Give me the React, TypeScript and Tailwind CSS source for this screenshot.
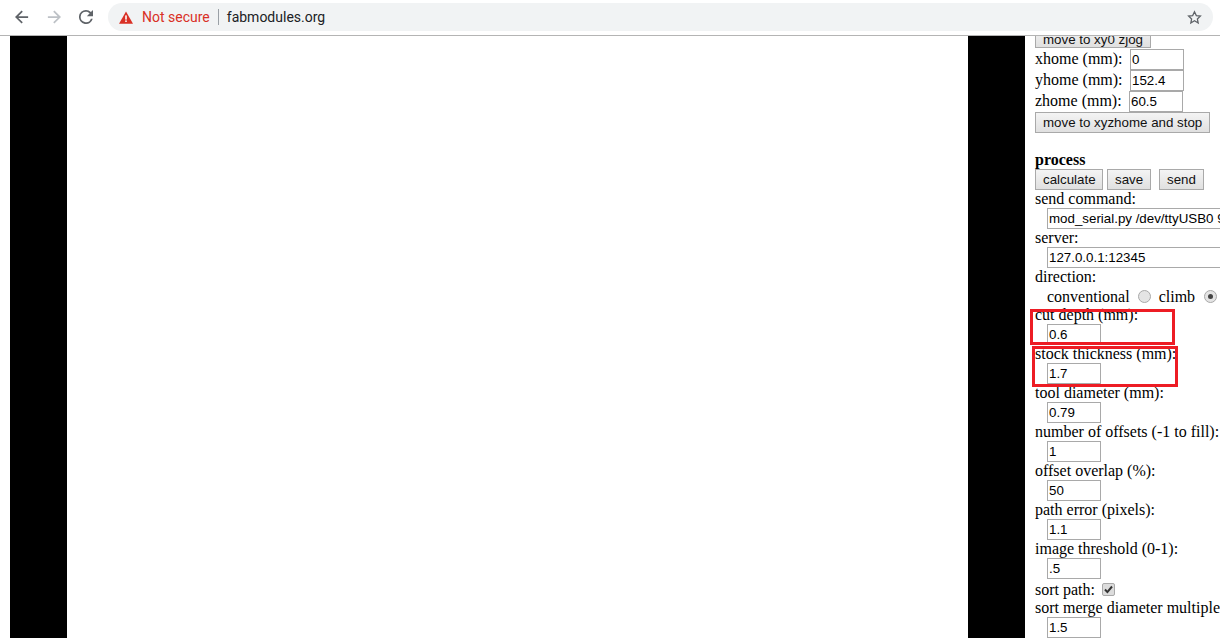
const serif = "font-['Liberation_Serif',serif] text-[16px] leading-[18px] text-black whitespace-nowrap";
const field =
  "block h-[21px] border border-[#a9a9a9] bg-white pl-[1px] font-['Liberation_Sans',sans-serif] text-[13.33px] text-black outline-none";
const button =
  "h-[21px] border border-[#a9a9a9] bg-gradient-to-b from-[#f4f4f4] to-[#e0e0e0] px-[7px] pt-[1px] font-['Liberation_Sans',sans-serif] text-[13.33px] leading-[18px] text-[#111] whitespace-nowrap";

function Toolbar() {
  return (
    <div className="flex h-[36px] items-center border-b border-[#b4b4b4] bg-white pb-[1px]">
      <div className="flex w-[108px] shrink-0 items-center">
        <svg width="14" height="14" viewBox="0 0 16 16" className="ml-[15px]" fill="#5f6368">
          <path d="M15 7H3.8l5.1-5.1L7.5.5 0 8l7.5 7.5 1.4-1.4L3.8 9H15z" />
        </svg>
        <svg width="14" height="14" viewBox="0 0 16 16" className="ml-[18px]" fill="#bdc1c6">
          <path d="M1 7h11.2L7.1 1.9 8.5.5 16 8l-7.5 7.5-1.4-1.4L12.2 9H1z" />
        </svg>
        <svg width="14" height="14" viewBox="0 0 16 16" className="ml-[18px]" fill="#5f6368">
          <path d="M13.6 2.4A7.9 7.9 0 0 0 8 0a8 8 0 1 0 7.7 10h-2.1A6 6 0 1 1 8 2c1.7 0 3.1.7 4.2 1.8L9 7h7V0z" />
        </svg>
      </div>
      <div className="flex h-[28px] w-[1105px] shrink-0 items-center rounded-full bg-[#f1f3f4] pl-[11px] font-['Roboto','Open_Sans',sans-serif] text-[14px]">
        <svg width="14" height="13" viewBox="0 0 16 14">
          <path d="M8 0l8 14H0z" fill="#d93025" />
          <rect x="7.1" y="4.6" width="1.8" height="4.8" fill="#fff" />
          <rect x="7.1" y="10.3" width="1.8" height="1.8" fill="#fff" />
        </svg>
        <span className="ml-[9px] text-[#d93025]">Not secure</span>
        <span className="mx-[8px] h-[16px] w-px bg-[#9aa0a6]" />
        <span className="text-[#202124]">fabmodules.org</span>
        <svg width="15" height="15" viewBox="0 0 24 24" className="ml-auto mr-[11px]" fill="none" stroke="#5f6368" strokeWidth="2">
          <path d="M12 2.8l2.9 6.1 6.6.8-4.9 4.6 1.3 6.6L12 17.2l-5.9 3.7 1.3-6.6-4.9-4.6 6.6-.8z" />
        </svg>
      </div>
    </div>
  );
}

function Field({ label, value, width = "w-[176px]" }: { label: string; value: string; width?: string }) {
  return (
    <div>
      <div className={serif}>{label}</div>
      <input readOnly value={value} className={`${field} ${width} ml-[12px]`} />
    </div>
  );
}

function Home({ label, value, gap }: { label: string; value: string; gap: string }) {
  return (
    <div className="flex h-[21px] items-center">
      <span className={`${serif} ${gap} pb-[2px]`}>{label}</span>
      <input readOnly value={value} className={`${field} w-[54px]`} />
    </div>
  );
}

function Sidebar() {
  return (
    <div className="relative h-[602px] w-[195px] shrink-0 overflow-hidden pl-[10px]">
      <button className={`${button} -mt-[9px] block w-[116px] !pt-[3px]`}>move to xy0 zjog</button>
      <div className="mt-[1px]">
        <Home label="xhome (mm):" value="0" gap="w-[95px]" />
        <Home label="yhome (mm):" value="152.4" gap="w-[95px]" />
        <Home label="zhome (mm):" value="60.5" gap="w-[94px]" />
      </div>
      <button className={`${button} block w-[175px]`}>move to xyzhome and stop</button>

      <div className={`${serif} mt-[18px] font-bold`}>process</div>
      <div className="flex">
        <button className={`${button} w-[68px]`}>calculate</button>
        <button className={`${button} ml-[4px] w-[44px]`}>save</button>
        <button className={`${button} ml-[8px] w-[45px]`}>send</button>
      </div>
      <Field label="send command:" value="mod_serial.py /dev/ttyUSB0 9600" />
      <Field label="server:" value="127.0.0.1:12345" />
      <div className={serif}>direction:</div>
      <div className="flex h-[20px] items-center pl-[12px]">
        <span className={`${serif} pt-[2px]`}>conventional</span>
        <span className="ml-[8px] h-[13px] w-[13px] rounded-full border border-[#a9a9a9] bg-[#e4e4e4]" />
        <span className={`${serif} ml-[8px] pt-[2px]`}>climb</span>
        <span className="ml-[9px] flex h-[13px] w-[13px] items-center justify-center rounded-full border border-[#a9a9a9] bg-[#e4e4e4]">
          <span className="h-[5px] w-[5px] rounded-full bg-[#444]" />
        </span>
      </div>
      <Field label="cut depth (mm):" value="0.6" width="w-[54px]" />
      <Field label="stock thickness (mm):" value="1.7" width="w-[54px]" />
      <Field label="tool diameter (mm):" value="0.79" width="w-[54px]" />
      <Field label="number of offsets (-1 to fill):" value="1" width="w-[54px]" />
      <Field label="offset overlap (%):" value="50" width="w-[54px]" />
      <Field label="path error (pixels):" value="1.1" width="w-[54px]" />
      <Field label="image threshold (0-1):" value=".5" width="w-[54px]" />
      <div className="flex h-[20px] items-center">
        <span className={`${serif} pt-[2px]`}>sort path:</span>
        <span className="ml-[7px] flex h-[13px] w-[13px] items-center justify-center rounded-[2px] border border-[#a9a9a9] bg-[#dcdcdc]">
          <svg width="9" height="9" viewBox="0 0 9 9" fill="none" stroke="#333" strokeWidth="2">
            <path d="M1 4.5l2.4 2.6L8 1.5" />
          </svg>
        </span>
      </div>
      <Field label="sort merge diameter multiple:" value="1.5" width="w-[54px]" />

      {/* red annotation boxes */}
      <div className="absolute left-[5px] top-[273px] h-[36px] w-[145px] border-[3px] border-[#ed1c24]" />
      <div className="absolute left-[7px] top-[310px] h-[41px] w-[146px] border-[3px] border-[#ed1c24]" />
    </div>
  );
}

export default function App() {
  return (
    <div className="h-[638px] w-[1220px] overflow-hidden bg-white">
      <Toolbar />
      <div className="flex">
        <div className="w-[10px] shrink-0" />
        <div className="h-[602px] w-[57px] shrink-0 bg-black" />
        <div className="w-[901px] shrink-0" />
        <div className="h-[602px] w-[57px] shrink-0 bg-black" />
        <Sidebar />
      </div>
    </div>
  );
}
